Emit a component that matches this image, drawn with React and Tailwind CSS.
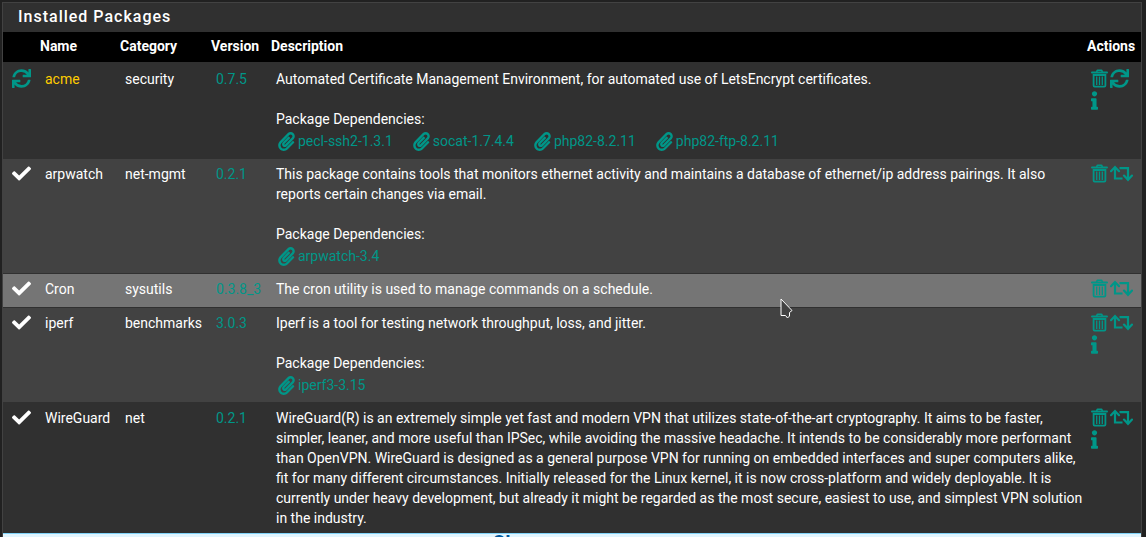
import { FaCheck, FaInfo, FaPaperclip, FaSync } from "react-icons/fa";

const packages = [
  {
    name: "acme",
    category: "security",
    version: "0.7.5",
    update: true,
    info: true,
    description:
      "Automated Certificate Management Environment, for automated use of LetsEncrypt certificates.",
    deps: ["pecl-ssh2-1.3.1", "socat-1.7.4.4", "php82-8.2.11", "php82-ftp-8.2.11"],
  },
  {
    name: "arpwatch",
    category: "net-mgmt",
    version: "0.2.1",
    description:
      "This package contains tools that monitors ethernet activity and maintains a database of ethernet/ip address pairings. It also reports certain changes via email.",
    deps: ["arpwatch-3.4"],
  },
  {
    name: "Cron",
    category: "sysutils",
    version: "0.3.8_3",
    active: true,
    description: "The cron utility is used to manage commands on a schedule.",
    deps: [],
  },
  {
    name: "iperf",
    category: "benchmarks",
    version: "3.0.3",
    info: true,
    description: "Iperf is a tool for testing network throughput, loss, and jitter.",
    deps: ["iperf3-3.15"],
  },
  {
    name: "WireGuard",
    category: "net",
    version: "0.2.1",
    info: true,
    description:
      "WireGuard(R) is an extremely simple yet fast and modern VPN that utilizes state-of-the-art cryptography. It aims to be faster, simpler, leaner, and more useful than IPSec, while avoiding the massive headache. It intends to be considerably more performant than OpenVPN. WireGuard is designed as a general purpose VPN for running on embedded interfaces and super computers alike, fit for many different circumstances. Initially released for the Linux kernel, it is now cross-platform and widely deployable. It is currently under heavy development, but already it might be regarded as the most secure, easiest to use, and simplest VPN solution in the industry.",
    deps: [],
  },
];

function TrashIcon() {
  return (
    <svg viewBox="0 0 17 19" className="h-[19px] w-[17px]" fill="none" stroke="currentColor">
      <path d="M1 3.5 H16" strokeWidth="2" strokeLinecap="round" />
      <path d="M5.5 3 L6.5 1.2 H10.5 L11.5 3" strokeWidth="1.6" strokeLinejoin="round" />
      <path d="M2.6 6 H14.4 V16.5 Q14.4 17.6 13.4 17.6 H3.6 Q2.6 17.6 2.6 16.5 Z" strokeWidth="1.8" />
      <path d="M5.7 7.5 V16 M8.5 7.5 V16 M11.3 7.5 V16" strokeWidth="1.3" />
    </svg>
  );
}

function RetweetIcon() {
  return (
    <svg viewBox="0 0 23 19" className="h-[19px] w-[23px]" fill="none" stroke="currentColor" strokeWidth="2.2">
      <path d="M5 3.5 V14.5 H12.5" />
      <path d="M1 7.2 L5 3 L9 7.2" strokeLinecap="round" />
      <path d="M9.5 4.2 H18 V15" />
      <path d="M14 11.6 L18 15.8 L22 11.6" strokeLinecap="round" />
    </svg>
  );
}

function PackageRow({ pkg, index }) {
  let bg = index % 2 ? "bg-[#424242]" : "bg-[#303030]";
  if (pkg.active) bg = "bg-[#757575]";

  return (
    <tr className={`${bg} h-[34px] border-t border-[#303030] align-top`}>
      <td className="py-[5px] pl-[9px]">
        {pkg.update ? (
          <FaSync title="Update available" className="size-[19px] text-[#009688]" />
        ) : (
          <FaCheck title="Up to date" className="size-[19px]" />
        )}
      </td>
      <td className={`py-[5px] pl-[10px] ${pkg.update ? "text-[#ffcc00]" : ""}`}>{pkg.name}</td>
      <td className="py-[5px] pl-[10px]">{pkg.category}</td>
      <td className="py-[5px] pl-[10px]">
        <a href="#changelog" className="text-[#009688]">{pkg.version}</a>
      </td>
      <td className="py-[5px] pl-[10px]">
        {pkg.description}
        {pkg.deps.length > 0 && (
          <>
            <div className="mt-5">Package Dependencies:</div>
            <div className="flex flex-wrap gap-x-5 pl-[2px]">
              {pkg.deps.map((dep) => (
                <a key={dep} href="#dependency" className="flex h-6 items-center gap-[3px] text-[#009688]">
                  <FaPaperclip className="h-[19px] w-[17px]" />
                  {dep}
                </a>
              ))}
            </div>
          </>
        )}
      </td>
      <td className="py-[5px] pl-1">
        <div className="flex flex-wrap items-center gap-x-[2px] gap-y-[3px] text-[#009688]">
          <a href="#remove" aria-label="Remove package">
            <TrashIcon />
          </a>
          <a href="#install" aria-label={pkg.update ? "Update package" : "Reinstall package"}>
            {pkg.update ? <FaSync className="size-[19px]" /> : <RetweetIcon />}
          </a>
          {pkg.info && (
            <a href="#info" aria-label="Package info" className="basis-full">
              <FaInfo className="h-[19px] w-[7px]" />
            </a>
          )}
        </div>
      </td>
    </tr>
  );
}

function Cursor() {
  return (
    <svg
      viewBox="0 0 13 21"
      className="pointer-events-none absolute top-[298px] left-[780px] h-[21px] w-[13px]"
      fill="#424242"
      stroke="#ffffff"
      strokeLinejoin="round"
    >
      <path d="M1 1 L12 12.5 L9.5 14.5 L9.5 18 L7.5 20 L5.5 17.5 L1 17.5 Z" />
    </svg>
  );
}

export default function App() {
  return (
    <div className="relative h-screen overflow-hidden bg-[#212121] pt-[2px] pr-1 pl-[2px] font-[Roboto,sans-serif] text-sm text-white">
      <div className="border border-[#424242] bg-[#303030]">
        <h2 className="px-[15px] pt-1 pb-[5px] text-base leading-5 font-medium tracking-[1px]">
          Installed Packages
        </h2>
        <table className="w-full table-fixed">
          <colgroup>
            <col className="w-[32px]" />
            <col className="w-[80px]" />
            <col className="w-[91px]" />
            <col className="w-[60px]" />
            <col />
            <col className="w-[54px]" />
          </colgroup>
          <thead className="bg-black text-left">
            <tr className="border-b-2 border-[#303030]">
              <td />
              <th className="pt-1 pb-[6px] pl-[5px]">Name</th>
              <th className="pt-1 pb-[6px] pl-[5px]">Category</th>
              <th className="pt-1 pb-[6px] pl-[5px]">Version</th>
              <th className="pt-1 pb-[6px] pl-[5px]">Description</th>
              <th className="pt-1 pb-[6px]">Actions</th>
            </tr>
          </thead>
          <tbody>
            {packages.map((pkg, i) => (
              <PackageRow key={pkg.name} pkg={pkg} index={i} />
            ))}
          </tbody>
        </table>
        <div className="border-t border-[#81d4fa] bg-[#e1f5fe] pl-[43%] text-xl leading-[18px] font-bold text-[#01579b]">
          Ch
        </div>
      </div>
      <Cursor />
    </div>
  );
}
